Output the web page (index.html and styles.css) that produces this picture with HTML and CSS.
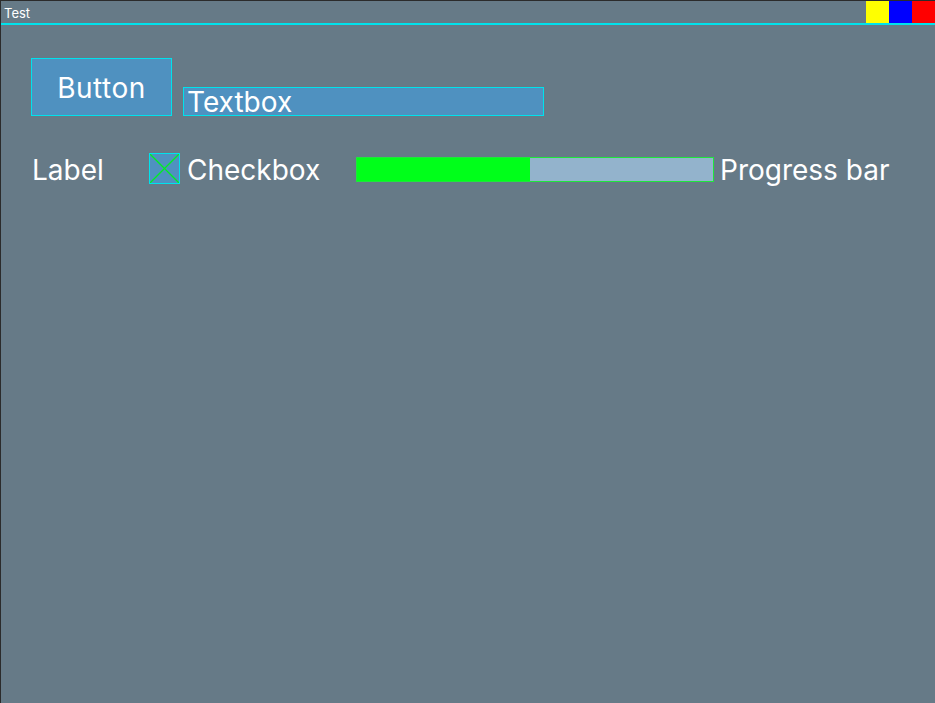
FILE: index.html
```html
<!DOCTYPE html>
<html>
<head>
<meta charset="utf-8">
<link rel="stylesheet" href="styles.css">
</head>
<body>
<div class="window">
  <div class="titlebar">
    <span class="title">Test</span>
    <div class="controls">
      <span class="ctl yellow"></span>
      <span class="ctl blue"></span>
      <span class="ctl red"></span>
    </div>
  </div>
  <div class="content">
    <div class="row row1">
      <div class="button">Button</div>
      <div class="textbox">Textbox</div>
    </div>
    <div class="row row2">
      <div class="label">Label</div>
      <div class="checkbox">
        <svg width="29" height="29" viewBox="0 0 29 29"><line x1="0" y1="0" x2="29" y2="29" stroke="#00ee22" stroke-width="1.3"/><line x1="29" y1="0" x2="0" y2="29" stroke="#00ee22" stroke-width="1.3"/></svg>
      </div>
      <div class="checkbox-text">Checkbox</div>
      <div class="progress"><div class="fill" style="width:173px"></div></div>
      <div class="progress-text">Progress bar</div>
    </div>
  </div>
</div>
</body>
</html>
```
FILE: styles.css
```css
html, body {
  margin: 0;
  padding: 0;
  background: #667a87;
}
.window {
  width: 935px;
  height: 703px;
  box-sizing: border-box;
  border-top: 1px solid #2b2b2b;
  border-left: 1px solid #2b2b2b;
  background: #667a87;
  font-family: Inter, "Noto Sans", sans-serif;
  color: #ffffff;
}
.titlebar {
  height: 22px;
  border-bottom: 2px solid #00e2ec;
  display: flex;
  justify-content: space-between;
  align-items: stretch;
}
.title {
  font-size: 13px;
  line-height: 24px;
  padding-left: 3px;
}
.controls {
  display: flex;
}
.ctl {
  width: 23px;
  height: 22px;
}
.yellow { background: #ffff00; }
.blue { background: #0000ff; }
.red { background: #ff0000; }
.content {
  padding: 33px 0 0 30px;
}
.row {
  display: flex;
}
.row1 {
  align-items: flex-end;
}
.button {
  width: 139px;
  height: 54px;
  border: 1px solid #00e2ec;
  background: #4f91c0;
  font-size: 28px;
  letter-spacing: 0.5px;
  display: flex;
  align-items: center;
  justify-content: center;
  padding-top: 2px;
  box-sizing: content-box;
}
.textbox {
  margin-left: 11px;
  width: 356px;
  height: 27px;
  border: 1px solid #00e2ec;
  background: #4f91c0;
  font-size: 28px;
  line-height: 29px;
  padding-left: 3px;
  overflow: visible;
}
.row2 {
  margin-top: 37px;
  align-items: center;
  height: 31px;
}
.label, .checkbox-text, .progress-text {
  font-size: 28px;
  padding-top: 3px;
}
.label {
  width: 118px;
  padding-left: 1px;
}
.checkbox {
  width: 29px;
  height: 29px;
  border: 1px solid #00e2ec;
  background: #4f91c0;
  margin-left: -1px;
}
.checkbox svg {
  display: block;
}
.checkbox-text {
  margin-left: 7px;
  width: 169px;
}
.progress {
  width: 356px;
  height: 23px;
  margin-top: 2px;
  border: 1px solid #1ee63c;
  background: #93b3cc;
}
.fill {
  height: 100%;
  background: #00ff1a;
}
.progress-text {
  margin-left: 6px;
}
```
